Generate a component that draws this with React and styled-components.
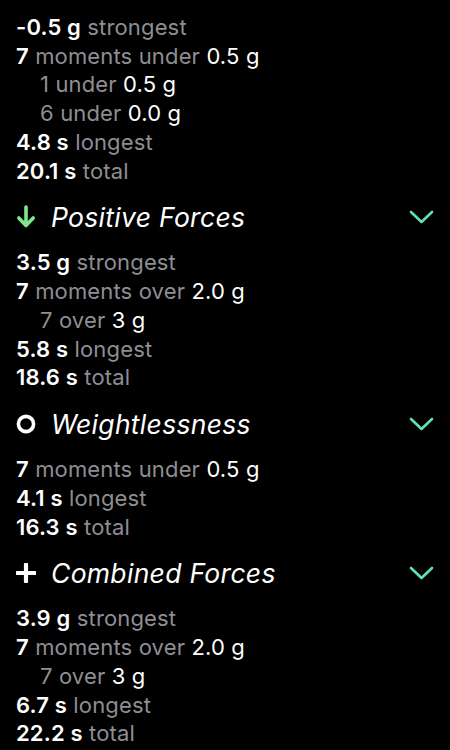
import React from "react";
import styled, { createGlobalStyle } from "styled-components";

const GlobalStyle = createGlobalStyle`
  html, body {
    margin: 0;
    padding: 0;
    background: #000000;
  }
  body {
    font-family: Inter, "Noto Sans", "Liberation Sans", sans-serif;
    -webkit-font-smoothing: antialiased;
  }
`;

const Page = styled.div`
  display: flex;
  flex-direction: column;
  padding: 13px 16px 0 16px;
  background: #000000;
  min-height: 750px;
  box-sizing: border-box;
`;

const Stats = styled.div`
  display: flex;
  flex-direction: column;
`;

const Line = styled.div`
  font-size: 22px;
  line-height: 28.7px;
  color: #8e8e93;
  white-space: nowrap;
  padding-left: ${(p) => (p.$indent ? "24px" : "0")};
  letter-spacing: 0.15px;
`;

const Strong = styled.span`
  color: #ffffff;
  font-weight: 600;
`;

const Value = styled.span`
  color: #ffffff;
`;

const Header = styled.div`
  display: flex;
  align-items: center;
  height: 63.2px;
`;

const IconBox = styled.div`
  display: flex;
  align-items: center;
  justify-content: center;
  width: 20px;
  height: 24px;
  margin-right: 15px;
`;

const Title = styled.div`
  flex: 1;
  font-size: 26.5px;
  font-style: italic;
  font-weight: 400;
  color: #ffffff;
  letter-spacing: 0.3px;
`;

const Chevron = styled.svg`
  width: 25px;
  height: 16px;
`;

const ArrowIcon = () => (
  <svg width="20" height="24" viewBox="0 0 20 24">
    <path
      d="M10 2 V20 M2.8 13 L10 20.5 L17.2 13"
      stroke="#7ee88a"
      strokeWidth="3.6"
      fill="none"
      strokeLinecap="round"
      strokeLinejoin="round"
    />
  </svg>
);

const RingIcon = () => (
  <svg width="20" height="20" viewBox="0 0 20 20">
    <circle cx="10" cy="10" r="7.6" stroke="#ffffff" strokeWidth="3.6" fill="none" />
  </svg>
);

const PlusIcon = () => (
  <svg width="20" height="20" viewBox="0 0 20 20">
    <path
      d="M10 1.5 V18.5 M1.5 10 H18.5"
      stroke="#ffffff"
      strokeWidth="4.2"
      fill="none"
      strokeLinecap="round"
    />
  </svg>
);

const SectionHeader = ({ icon, title }) => (
  <Header>
    <IconBox>{icon}</IconBox>
    <Title>{title}</Title>
    <Chevron viewBox="0 0 25 16">
      <path
        d="M2 3 L12.5 13 L23 3"
        stroke="#5fe3b2"
        strokeWidth="2.6"
        fill="none"
        strokeLinecap="round"
        strokeLinejoin="round"
      />
    </Chevron>
  </Header>
);

export default function App() {
  return (
    <>
      <GlobalStyle />
      <Page>
        <Stats>
          <Line>
            <Strong>-0.5 g</Strong> strongest
          </Line>
          <Line>
            <Strong>7</Strong> moments under <Value>0.5 g</Value>
          </Line>
          <Line $indent>
            1 under <Value>0.5 g</Value>
          </Line>
          <Line $indent>
            6 under <Value>0.0 g</Value>
          </Line>
          <Line>
            <Strong>4.8 s</Strong> longest
          </Line>
          <Line>
            <Strong>20.1 s</Strong> total
          </Line>
        </Stats>

        <SectionHeader icon={<ArrowIcon />} title="Positive Forces" />
        <Stats>
          <Line>
            <Strong>3.5 g</Strong> strongest
          </Line>
          <Line>
            <Strong>7</Strong> moments over <Value>2.0 g</Value>
          </Line>
          <Line $indent>
            7 over <Value>3 g</Value>
          </Line>
          <Line>
            <Strong>5.8 s</Strong> longest
          </Line>
          <Line>
            <Strong>18.6 s</Strong> total
          </Line>
        </Stats>

        <SectionHeader icon={<RingIcon />} title="Weightlessness" />
        <Stats>
          <Line>
            <Strong>7</Strong> moments under <Value>0.5 g</Value>
          </Line>
          <Line>
            <Strong>4.1 s</Strong> longest
          </Line>
          <Line>
            <Strong>16.3 s</Strong> total
          </Line>
        </Stats>

        <SectionHeader icon={<PlusIcon />} title="Combined Forces" />
        <Stats>
          <Line>
            <Strong>3.9 g</Strong> strongest
          </Line>
          <Line>
            <Strong>7</Strong> moments over <Value>2.0 g</Value>
          </Line>
          <Line $indent>
            7 over <Value>3 g</Value>
          </Line>
          <Line>
            <Strong>6.7 s</Strong> longest
          </Line>
          <Line>
            <Strong>22.2 s</Strong> total
          </Line>
        </Stats>
      </Page>
    </>
  );
}
